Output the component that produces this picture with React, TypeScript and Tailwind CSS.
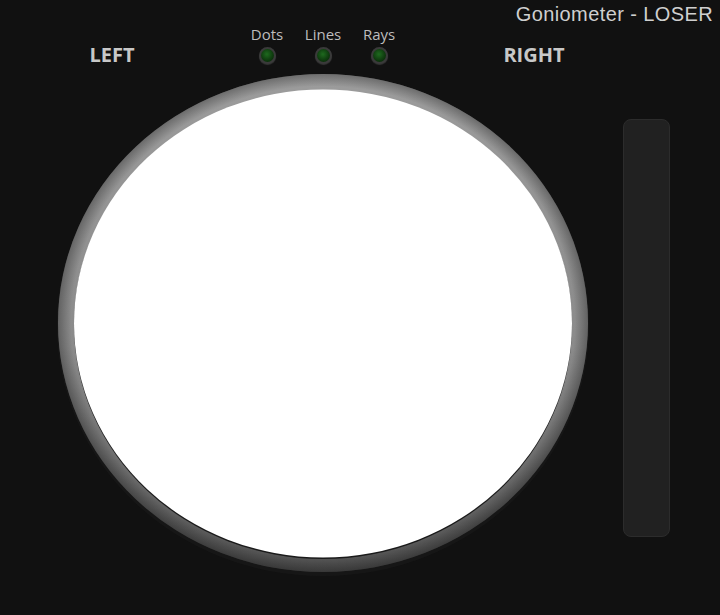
import React from "react";

const modes = ["Dots", "Lines", "Rays"];

const Led = () => (
  <div className="w-[17px] h-[17px] rounded-full bg-[#3a3a3a] p-[2px] shadow-[0_1px_1px_rgba(255,255,255,0.15)]">
    <div className="w-full h-full rounded-full bg-[radial-gradient(circle_at_45%_40%,#1f6a1f_0%,#0f3d0f_55%,#061a06_100%)]" />
  </div>
);

const Scope = () => (
  <svg width="540" height="510" viewBox="0 0 540 510" className="block">
    <defs>
      <linearGradient id="ring" x1="0" y1="0" x2="0" y2="1">
        <stop offset="0" stopColor="#9c9c9c" />
        <stop offset="0.55" stopColor="#8a8a8a" />
        <stop offset="1" stopColor="#505050" />
      </linearGradient>
      <radialGradient id="shade" cx="0.5" cy="0.5" r="0.5">
        <stop offset="0.95" stopColor="#000" stopOpacity="0" />
        <stop offset="1" stopColor="#000" stopOpacity="0.3" />
      </radialGradient>
    </defs>
    <ellipse cx="270" cy="256" rx="266" ry="251" fill="#1a1a1a" opacity="0.6" />
    <ellipse cx="270" cy="254" rx="265" ry="249" fill="url(#ring)" />
    <ellipse cx="270" cy="254" rx="265" ry="249" fill="url(#shade)" />
    <ellipse cx="270" cy="256" rx="249" ry="234" fill="#1a1a1a" />
    <ellipse cx="270" cy="254.5" rx="249" ry="234" fill="#ffffff" />
  </svg>
);

export default function App() {
  return (
    <div className="w-[720px] h-[615px] bg-[#111111] overflow-hidden font-['Open_Sans',sans-serif] text-[#cfcfcf]">
      <div className="h-[26px] flex justify-end pr-[7px] pt-[1px]">
        <span className="text-[20px] leading-[26px] tracking-[0.4px] font-['Liberation_Sans',sans-serif]">
          Goniometer - LOSER
        </span>
      </div>
      <div className="flex">
        <div className="w-[600px] flex flex-col">
          <div className="flex items-end h-[43px]">
            <div className="ml-[62px] w-[100px] text-center text-[20px] font-bold leading-[28px] text-[#c8c8c8]">
              LEFT
            </div>
            <div className="ml-[76px] w-[170px] mb-[5px] flex justify-center gap-[33px]">
              {modes.map((m) => (
                <div key={m} className="flex flex-col items-center w-[23px]">
                  <span className="text-[15px] leading-[18px] text-[#bdbdbd]">{m}</span>
                  <div className="mt-[4px]">
                    <Led />
                  </div>
                </div>
              ))}
            </div>
            <div className="ml-[76px] w-[100px] text-center text-[20px] font-bold leading-[28px] text-[#c8c8c8]">
              RIGHT
            </div>
          </div>
          <div className="ml-[53px]">
            <Scope />
          </div>
        </div>
        <div className="ml-[23px] mt-[93px] w-[47px] h-[418px] rounded-[8px] bg-[#212121] border border-[#2c2c2c]" />
      </div>
    </div>
  );
}
